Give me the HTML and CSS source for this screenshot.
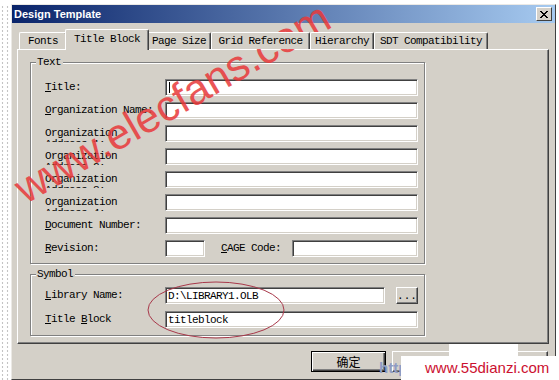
FILE: index.html
```html
<!DOCTYPE html>
<html lang="en">
<head>
    <meta charset="UTF-8">
    <title>Design Template</title>
    <link rel="stylesheet" href="styles.css">
</head>
<body>
    <div class="screen">
        <div class="desk"></div>
        <div class="dialog">
            <div class="titlebar">
                <span class="title">Design Template</span>
                <span class="close">
                    <svg width="8" height="7" viewBox="0 0 8 7" shape-rendering="crispEdges">
                        <path d="M0 0h2v1h1v1h2v-1h1v-1h2v1h-1v1h-1v1h-1v1h1v1h1v1h1v1h-2v-1h-1v-1h-2v1h-1v1h-2v-1h1v-1h1v-1h1v-1h-1v-1h-1v-1h-1z" fill="#000"/>
                    </svg>
                </span>
            </div>
            <div class="main">
                <div class="tabs">
                    <div class="tab tab-fonts">Fonts</div>
                    <div class="tab tab-title on">Title Block</div>
                    <div class="tab tab-page">Page Size</div>
                    <div class="tab tab-grid">Grid Reference</div>
                    <div class="tab tab-hier">Hierarchy</div>
                    <div class="tab tab-sdt">SDT Compatibility</div>
                </div>
                <div class="panel">
                    <fieldset class="group group-text">
                        <legend>Text</legend>
                        <div class="group-body">
                            <div class="row">
                                <label class="lbl"><u>T</u>itle:</label>
                                <input class="field has-caret" type="text">
                            </div>
                            <div class="row">
                                <label class="lbl"><u>O</u>rganization Name:</label>
                                <input class="field" type="text">
                            </div>
                            <div class="row">
                                <label class="lbl">Organization Address 1:</label>
                                <input class="field" type="text">
                            </div>
                            <div class="row">
                                <label class="lbl">Organization Address 2:</label>
                                <input class="field" type="text">
                            </div>
                            <div class="row">
                                <label class="lbl">Organization Address 3:</label>
                                <input class="field" type="text">
                            </div>
                            <div class="row">
                                <label class="lbl">Organization Address 4:</label>
                                <input class="field" type="text">
                            </div>
                            <div class="row">
                                <label class="lbl"><u>D</u>ocument Number:</label>
                                <input class="field" type="text">
                            </div>
                            <div class="row">
                                <label class="lbl"><u>R</u>evision:</label>
                                <input class="field field-rev" type="text">
                                <label class="lbl lbl-cage"><u>C</u>AGE Code:</label>
                                <input class="field field-cage" type="text">
                            </div>
                        </div>
                    </fieldset>
                    <fieldset class="group group-symbol">
                        <legend>Symbol</legend>
                        <div class="group-body">
                            <div class="row">
                                <label class="lbl"><u>L</u>ibrary Name:</label>
                                <input class="field field-lib" type="text" value="D:\LIBRARY1.OLB">
                                <button class="browse">...</button>
                            </div>
                            <div class="row">
                                <label class="lbl"><u>T</u>itle <u>B</u>lock</label>
                                <input class="field" type="text" value="titleblock">
                            </div>
                        </div>
                    </fieldset>
                </div>
                <div class="actions">
                    <button class="btn btn-default">确定</button>
                    <button class="btn">取消</button>
                    <button class="btn">帮助</button>
                </div>
            </div>
        </div>
    </div>

    <!-- watermarks lying over the screenshot -->
    <svg class="mark-ellipse" width="140" height="60" viewBox="0 0 140 60">
        <ellipse cx="69" cy="29" rx="68" ry="28" fill="none" stroke="#a8384a" stroke-width="1"/>
    </svg>
    <div class="mark-elecfans">www.elecfans.com</div>
    <div class="mark-http">http</div>
    <div class="mark-55">www.55dianzi.com</div>
</body>
</html>
```

FILE: styles.css
```css
body {
    margin: 0;
    width: 559px;
    height: 380px;
    overflow: hidden;
    position: relative;
    background: #fff;
    font-family: "Liberation Mono", "Noto Sans CJK SC", monospace;
    font-size: 11px;
    letter-spacing: -0.6px;
    color: #000;
}

.screen {
    display: flex;
    height: 380px;
    padding-top: 4px;
    box-sizing: border-box;
}

.desk {
    width: 11px;
    flex: none;
    background-image: radial-gradient(#c4c4c4 0.7px, transparent 1.2px);
    background-size: 5px 4px;
    background-position: 0 1px;
}

.dialog {
    width: 545px;
    height: 376px;
    box-sizing: border-box;
    background: #d4d0c8;
    border: 1px solid;
    border-color: #ebe9e5 #404040 #404040 #ebe9e5;
    display: flex;
    flex-direction: column;
}

.titlebar {
    height: 18px;
    flex: none;
    display: flex;
    align-items: center;
    justify-content: space-between;
    padding: 0 3px 0 2px;
    background: linear-gradient(90deg, #0a246a, #a6caf0);
}

.title {
    font: bold 11px "Liberation Sans", Arial, sans-serif;
    letter-spacing: 0;
    color: #fff;
}

.close {
    width: 16px;
    height: 14px;
    box-sizing: border-box;
    background: #d4d0c8;
    border: 1px solid;
    border-color: #fff #404040 #404040 #fff;
    display: flex;
    align-items: center;
    justify-content: center;
}

.main {
    padding: 6px 6px 0 5px;
}

.tabs {
    display: flex;
    align-items: flex-end;
    height: 20px;
    padding-left: 2px;
    position: relative;
    z-index: 1;
}

.tab {
    height: 17px;
    box-sizing: border-box;
    padding-top: 3px;
    line-height: 11px;
    text-align: center;
    border: 1px solid;
    border-bottom: none;
    border-color: #fff #404040 #fff #fff;
    border-radius: 2px 2px 0 0;
    box-shadow: inset -1px 0 #808080;
    background: #d4d0c8;
}

.tab.on {
    height: 21px;
    margin: 0 -2px -1px;
    padding-top: 4px;
    position: relative;
}

.tab-fonts { width: 48px; }
.tab-title { width: 84px; }
.tab-page { width: 64px; }
.tab-grid { width: 99px; }
.tab-hier { width: 64px; }
.tab-sdt { width: 114px; }

.panel {
    height: 295px;
    box-sizing: border-box;
    border: 1px solid;
    border-color: #fff #404040 #404040 #fff;
    box-shadow: inset -1px -1px #808080;
    padding: 6px 0 0 12px;
}

.group {
    margin: 0;
    padding: 0;
    width: 395px;
    box-sizing: border-box;
    border: 1px solid #808080;
    box-shadow: inset 1px 1px #fff, 1px 1px #fff;
}

.group legend {
    margin-left: 5px;
    padding: 0 2px 0 1px;
    line-height: 12px;
    background: #d4d0c8;
}

.group-body {
    display: flex;
    flex-direction: column;
    gap: 6px;
    padding: 11px 6px 6px 14px;
}

.group-symbol {
    margin-top: 4px;
}

.group-symbol .group-body {
    gap: 7px;
    padding-top: 7px;
    padding-bottom: 7px;
}

.row {
    display: flex;
    align-items: flex-start;
    height: 17px;
}

.lbl {
    width: 120px;
    flex: none;
    height: 14px;
    margin-top: 3px;
    line-height: 11px;
    overflow: hidden;
}

.lbl-cage {
    width: 71px;
    margin-left: 16px;
}

.field {
    width: 253px;
    height: 17px;
    box-sizing: border-box;
    margin: 0;
    padding: 0 2px;
    font: inherit;
    letter-spacing: inherit;
    background: #fff;
    border: 1px solid;
    border-color: #808080 #fff #fff #808080;
    box-shadow: inset 1px 1px #404040, inset -1px -1px #d4d0c8;
    outline: none;
}

.has-caret {
    background: #fff linear-gradient(#000, #000) no-repeat 3px 2px / 1px 11px;
}

.field-rev { width: 40px; }
.field-cage { width: 126px; }
.field-lib { width: 220px; }

.browse {
    width: 22px;
    height: 17px;
    margin-left: 11px;
    padding: 0;
    font: inherit;
    letter-spacing: 0;
    background: #d4d0c8;
    border: 1px solid;
    border-color: #fff #404040 #404040 #fff;
    box-shadow: inset -1px -1px #808080;
}

.actions {
    display: flex;
    justify-content: flex-end;
    gap: 6px;
    padding: 7px 1px 0 0;
}

.btn {
    width: 75px;
    height: 21px;
    padding: 0;
    font: 12px "Noto Sans CJK SC", sans-serif;
    letter-spacing: 0;
    color: #000;
    background: #d4d0c8;
    border: 1px solid;
    border-color: #fff #404040 #404040 #fff;
    box-shadow: inset -1px -1px #808080;
}

.btn-default {
    border-color: #000;
    box-shadow: inset 1px 1px #fff, inset -1px -1px #404040, inset -2px -2px #808080;
}

.mark-ellipse {
    position: absolute;
    left: 147px;
    top: 281px;
}

.mark-elecfans {
    position: absolute;
    left: -6px;
    top: 78px;
    width: 358px;
    font: 43px/48px "Liberation Sans", Arial, sans-serif;
    letter-spacing: 0;
    color: #e8393a;
    opacity: 0.85;
    white-space: nowrap;
    transform: rotate(-30deg);
    transform-origin: 179px 24px;
}

.mark-http {
    position: absolute;
    left: 379px;
    top: 356px;
    font: bold 15px/24px "Liberation Sans", Arial, sans-serif;
    letter-spacing: 0;
    color: #8f9cc4;
}

.mark-55 {
    position: absolute;
    left: 401px;
    top: 356px;
    width: 158px;
    height: 24px;
    box-sizing: border-box;
    padding-left: 24px;
    background: #fff;
    font: 15px/24px "Liberation Sans", Arial, sans-serif;
    letter-spacing: 0;
    color: #cc1030;
}

.mark-55::before {
    content: "";
    position: absolute;
    left: 48px;
    top: -12px;
    width: 69px;
    height: 12px;
    background: #fff;
}
```
